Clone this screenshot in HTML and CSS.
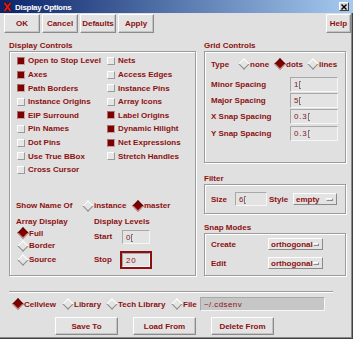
FILE: index.html
```html
<!DOCTYPE html>
<html lang="en">

<head>
    <meta charset="UTF-8" />
    <title>Display Options</title>
    <link rel="stylesheet" href="styles.css">
</head>

<body>
    <div class="window">
        <div class="titlebar">
            <svg class="app-icon" width="9" height="10" viewBox="0 0 9 10">
                <path d="M1.5 1 L7.5 9 M7.5 1 L1.5 9" stroke="#5a0000" stroke-width="3" />
                <path d="M1.5 1 L7.5 9 M7.5 1 L1.5 9" stroke="#e02020" stroke-width="1.6" />
            </svg>
            <span class="title">Display Options</span>
            <span class="close">
                <svg width="6" height="6" viewBox="0 0 6 6">
                    <path d="M0.5 0.5 L5.5 5.5 M5.5 0.5 L0.5 5.5" stroke="#000" stroke-width="1.4" />
                </svg>
            </span>
        </div>

        <div class="toolbar">
            <button class="btn">OK</button>
            <button class="btn">Cancel</button>
            <button class="btn">Defaults</button>
            <button class="btn">Apply</button>
            <button class="btn help">Help</button>
        </div>

        <div class="main">
            <!-- 左侧: Display Controls -->
            <div class="col-left">
                <div class="group-label">Display Controls</div>
                <div class="frame frame-display">
                    <div class="checks">
                        <div class="check on"><span class="box"></span>Open to Stop Level</div>
                        <div class="check"><span class="box"></span>Nets</div>
                        <div class="check on"><span class="box"></span>Axes</div>
                        <div class="check"><span class="box"></span>Access Edges</div>
                        <div class="check on"><span class="box"></span>Path Borders</div>
                        <div class="check"><span class="box"></span>Instance Pins</div>
                        <div class="check"><span class="box"></span>Instance Origins</div>
                        <div class="check"><span class="box"></span>Array Icons</div>
                        <div class="check on"><span class="box"></span>EIP Surround</div>
                        <div class="check on"><span class="box"></span>Label Origins</div>
                        <div class="check"><span class="box"></span>Pin Names</div>
                        <div class="check on"><span class="box"></span>Dynamic Hilight</div>
                        <div class="check"><span class="box"></span>Dot Pins</div>
                        <div class="check on"><span class="box"></span>Net Expressions</div>
                        <div class="check"><span class="box"></span>Use True BBox</div>
                        <div class="check"><span class="box"></span>Stretch Handles</div>
                        <div class="check"><span class="box"></span>Cross Cursor</div>
                    </div>

                    <div class="show-name">
                        <span class="show-label">Show Name Of</span>
                        <span class="radio w-instance"><i class="dia"></i>instance</span>
                        <span class="radio on"><i class="dia"></i>master</span>
                    </div>

                    <div class="lower">
                        <div class="array-col">
                            <div class="sub-label">Array Display</div>
                            <div class="radio row-full on"><i class="dia"></i>Full</div>
                            <div class="radio row-std"><i class="dia"></i>Border</div>
                            <div class="radio row-std"><i class="dia"></i>Source</div>
                        </div>
                        <div class="levels-col">
                            <div class="sub-label">Display Levels</div>
                            <div class="level-row">
                                <span class="level-label">Start</span>
                                <span class="ring"><span class="entry entry-level">0<i class="caret"></i></span></span>
                            </div>
                            <div class="level-row stop">
                                <span class="level-label">Stop</span>
                                <span class="ring focus"><span class="entry entry-level">20</span></span>
                            </div>
                        </div>
                    </div>
                </div>
            </div>

            <!-- 右侧: Grid / Filter / Snap -->
            <div class="col-right">
                <div class="group-label">Grid Controls</div>
                <div class="frame frame-grid">
                    <div class="type-row">
                        <span class="type-label">Type</span>
                        <span class="radio w-none"><i class="dia"></i>none</span>
                        <span class="radio w-dots on"><i class="dia"></i>dots</span>
                        <span class="radio"><i class="dia"></i>lines</span>
                    </div>
                    <div class="spacing">
                        <span>Minor Spacing</span>
                        <span class="entry entry-grid">1<i class="caret"></i></span>
                        <span>Major Spacing</span>
                        <span class="entry entry-grid">5<i class="caret"></i></span>
                        <span>X Snap Spacing</span>
                        <span class="entry entry-grid">0.3<i class="caret"></i></span>
                        <span>Y Snap Spacing</span>
                        <span class="entry entry-grid">0.3<i class="caret"></i></span>
                    </div>
                </div>

                <div class="group-label gap-filter">Filter</div>
                <div class="frame frame-filter">
                    <span class="size-label">Size</span>
                    <span class="entry entry-size">6<i class="caret"></i></span>
                    <span class="style-label">Style</span>
                    <span class="option w-empty">empty<i class="indicator"></i></span>
                </div>

                <div class="group-label gap-snap">Snap Modes</div>
                <div class="frame frame-snap">
                    <div class="snap-row">
                        <span class="snap-label">Create</span>
                        <span class="option w-ortho">orthogonal<i class="indicator"></i></span>
                    </div>
                    <div class="snap-row second">
                        <span class="snap-label">Edit</span>
                        <span class="option w-ortho">orthogonal<i class="indicator"></i></span>
                    </div>
                </div>
            </div>
        </div>

        <div class="separator"></div>

        <div class="target-row">
            <span class="radio w-cellview on"><i class="dia"></i>Cellview</span>
            <span class="radio w-library"><i class="dia"></i>Library</span>
            <span class="radio w-tech"><i class="dia"></i>Tech Library</span>
            <span class="radio w-file"><i class="dia"></i>File</span>
            <span class="entry entry-file">~/.cdsenv</span>
        </div>

        <div class="bottom-buttons">
            <button class="btn wide">Save To</button>
            <button class="btn wide">Load From</button>
            <button class="btn wide">Delete From</button>
        </div>
    </div>
</body>

</html>
```

FILE: styles.css
```css
* {
    box-sizing: border-box;
}

body {
    margin: 0;
    font-family: "Liberation Sans", Arial, sans-serif;
    font-size: 8px;
    font-weight: bold;
    color: #8c1010;
}

.window {
    width: 353px;
    height: 339px;
    background: #e0e0e0;
    box-shadow: inset -1px -1px 0 #404040, inset -2px -2px 0 #8a8a8a;
    overflow: hidden;
}

/* 标题栏 */
.titlebar {
    height: 13px;
    display: flex;
    align-items: center;
    padding-left: 3px;
    background: linear-gradient(to right, #0a246a, #a6caf0);
}

.app-icon {
    display: block;
    flex: none;
}

.title {
    margin-left: 3px;
    color: #fff;
    letter-spacing: -0.3px;
    line-height: 13px;
    padding-top: 1px;
}

.close {
    margin-left: auto;
    margin-right: 4px;
    width: 10px;
    height: 9px;
    display: flex;
    align-items: center;
    justify-content: center;
    background: #d8d8d8;
    border: 1px solid;
    border-color: #fff #404040 #404040 #fff;
}

.close svg {
    display: block;
}

/* 按钮 */
.btn {
    appearance: none;
    padding: 0;
    font: inherit;
    color: inherit;
    background: #e3e3e3;
    border: 1px solid;
    border-color: #fff #8a8a8a #8a8a8a #fff;
    box-shadow: inset -1px -1px 0 #c4c4c4;
    cursor: pointer;
}

.toolbar {
    display: flex;
    gap: 2px;
    padding: 1px 0 0 4px;
}

.toolbar .btn {
    width: 36px;
    height: 19px;
}

.toolbar .help {
    width: 25px;
    margin-left: auto;
    margin-right: 2px;
}

/* 主体两栏 */
.main {
    display: flex;
    gap: 8px;
    padding: 7px 0 0 9px;
}

.col-left {
    width: 187px;
}

.col-right {
    width: 142px;
}

.group-label {
    height: 11px;
    line-height: 11px;
}

.gap-filter {
    margin-top: 10px;
}

.gap-snap {
    margin-top: 8px;
}

.frame {
    border: 1px solid #9c9c9c;
    box-shadow: inset 1px 1px 0 #fff, 1px 1px 0 #fff;
}

.frame-display {
    height: 225px;
    padding-left: 6px;
}

.checks {
    display: grid;
    grid-template-columns: 90px 1fr;
    grid-auto-rows: 13.6px;
    margin: 2.2px 0 0 1px;
}

.check {
    display: flex;
    align-items: center;
    gap: 3px;
    white-space: nowrap;
}

.box {
    width: 8px;
    height: 8px;
    flex: none;
    background: #e6e6e6;
    border: 1px solid;
    border-color: #fff #9a9a9a #9a9a9a #fff;
}

.check.on .box {
    background: #7c0000;
    border-color: #a86a6a #c9a0a0 #c9a0a0 #a86a6a;
}

/* 菱形单选 */
.radio {
    display: flex;
    align-items: center;
    gap: 2px;
    white-space: nowrap;
}

.dia {
    width: 9px;
    height: 9px;
    flex: none;
    display: flex;
    align-items: center;
    justify-content: center;
}

.dia::before {
    content: "";
    width: 6px;
    height: 6px;
    background: #e4e4e4;
    border: 1px solid;
    border-color: #fff #8c8c8c #8c8c8c #fff;
    transform: rotate(45deg);
}

.radio.on .dia::before {
    background: #800000;
    border-color: #600000 #c49494 #c49494 #600000;
}

.show-name {
    display: flex;
    align-items: center;
    height: 12px;
    margin-top: 23.1px;
}

.show-label {
    width: 67px;
}

.w-instance {
    width: 50px;
}

.lower {
    display: grid;
    grid-template-columns: 78px 1fr;
    margin-top: 4.3px;
}

.sub-label {
    height: 12px;
    line-height: 12px;
}

.array-col .radio {
    padding-left: 2px;
}

.row-full {
    height: 11px;
}

.row-std {
    height: 14px;
}

.level-row {
    display: flex;
    align-items: center;
    height: 18px;
}

.level-row.stop {
    margin-top: 5px;
}

.level-label {
    width: 26px;
}

.ring {
    width: 32px;
    height: 18px;
    border: 2px solid transparent;
}

.ring.focus {
    border-color: #8c1010;
}

/* 输入框 */
.entry {
    display: flex;
    align-items: flex-start;
    padding: 2px 0 0 3px;
    font-weight: normal;
    letter-spacing: 0.8px;
    background: #e3e3e3;
    border: 1px solid;
    border-color: #a8a8a8 #f6f6f6 #f6f6f6 #a8a8a8;
}

.caret {
    width: 2px;
    height: 8px;
    margin: 1px 0 0 0;
    border: 1px solid #7a7a7a;
    border-right: none;
}

.entry-level {
    width: 28px;
    height: 14px;
}

.entry-grid {
    width: 48px;
    height: 15px;
}

.entry-size {
    width: 32px;
    height: 14px;
}

.entry-file {
    width: 125px;
    height: 14px;
    margin-left: 5px;
    background: #c6c6c6;
    letter-spacing: 0.4px;
}

/* 右侧 */
.frame-grid {
    height: 112px;
    padding: 6px 0 0 6px;
}

.type-row {
    display: flex;
    align-items: center;
    height: 12px;
}

.type-label {
    width: 28px;
}

.w-none {
    width: 36px;
}

.w-dots {
    width: 33px;
}

.spacing {
    display: grid;
    grid-template-columns: 79px 48px;
    grid-auto-rows: 15px;
    row-gap: 1.4px;
    align-items: center;
    margin-top: 6.5px;
}

.frame-filter {
    height: 30px;
    display: flex;
    align-items: center;
    padding-left: 6px;
}

.size-label {
    width: 24px;
}

.style-label {
    width: 24px;
    margin-left: 2px;
}

.option {
    display: flex;
    align-items: center;
    height: 12px;
    padding-left: 2px;
    background: #e3e3e3;
    border: 1px solid;
    border-color: #fff #8a8a8a #8a8a8a #fff;
}

.indicator {
    width: 7px;
    height: 3px;
    margin-left: auto;
    margin-right: 3px;
    background: #e8e8e8;
    border: 1px solid;
    border-color: #fff #8a8a8a #8a8a8a #fff;
}

.w-empty {
    width: 44px;
}

.w-ortho {
    width: 55px;
}

.frame-snap {
    height: 43px;
    padding: 4px 0 0 6px;
}

.snap-row {
    display: flex;
    align-items: center;
    height: 12px;
}

.snap-row.second {
    margin-top: 7px;
}

.snap-label {
    width: 57px;
}

/* 底部 */
.separator {
    margin: 15px 20px 0 9px;
    border-top: 1px solid #9c9c9c;
    border-bottom: 1px solid #fff;
}

.target-row {
    display: flex;
    align-items: center;
    height: 14px;
    margin-top: 4px;
    padding-left: 13px;
}

.w-cellview {
    width: 50px;
}

.w-library {
    width: 44px;
}

.w-tech {
    width: 65px;
}

.w-file {
    width: 23px;
}

.bottom-buttons {
    display: flex;
    gap: 15px;
    margin-top: 6px;
    padding-left: 55px;
}

.bottom-buttons .wide {
    width: 63px;
    height: 18px;
}
```
